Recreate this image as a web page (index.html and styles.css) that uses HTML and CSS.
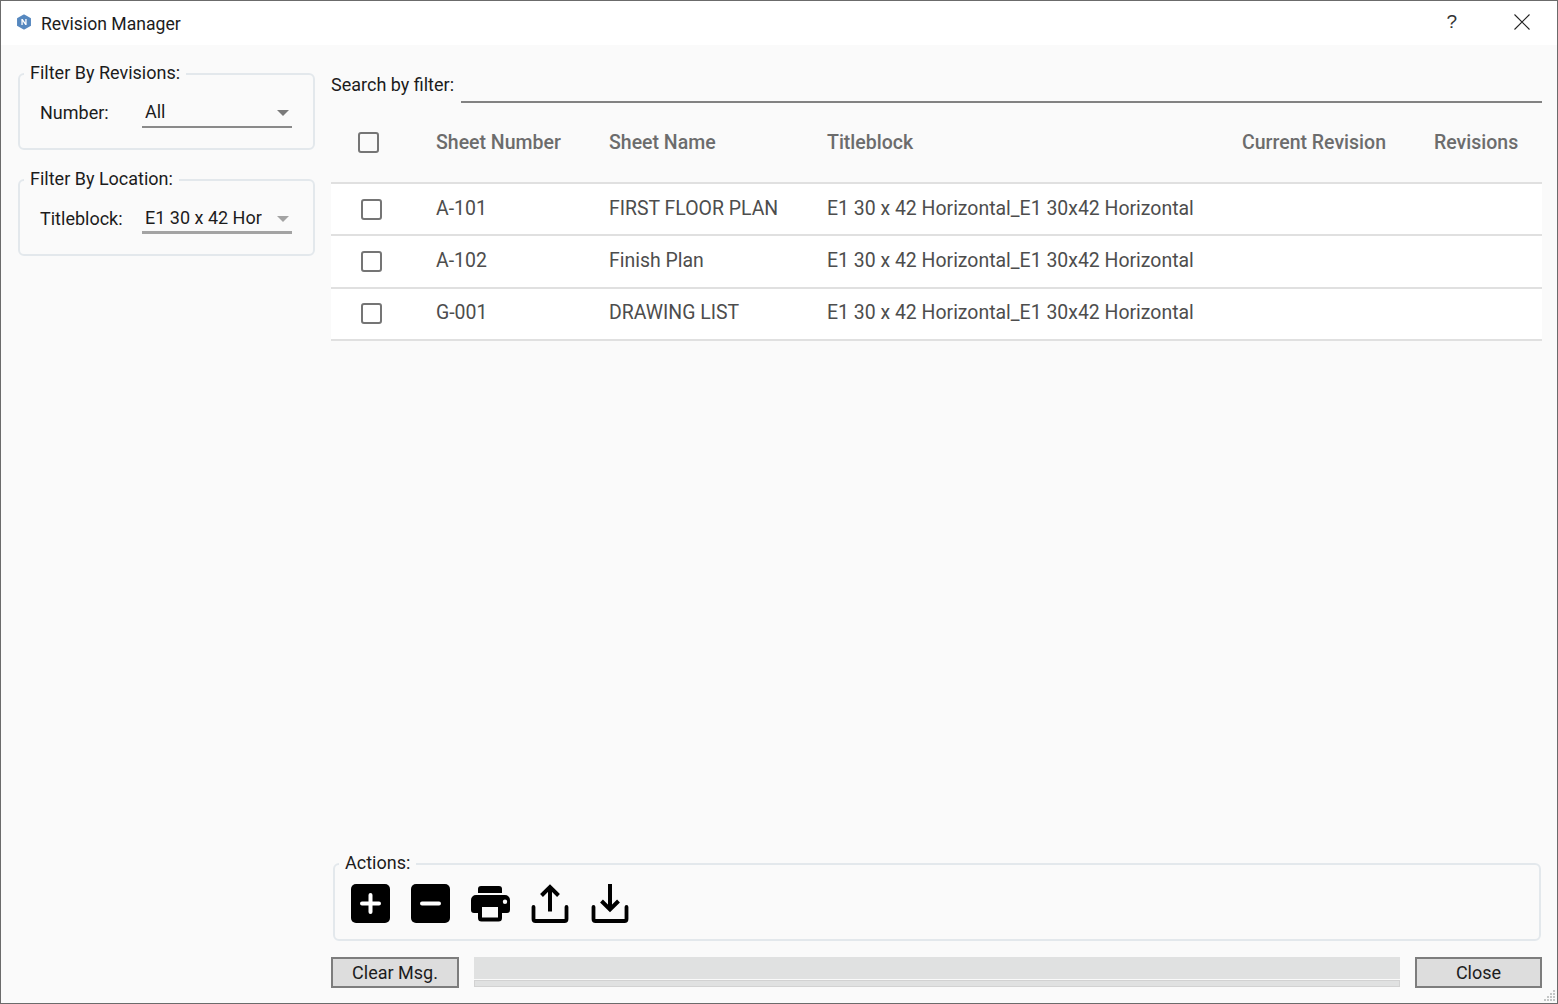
FILE: index.html
```html
<!DOCTYPE html>
<html lang="en">
<head>
<meta charset="UTF-8">
<meta name="viewport" content="width=device-width, initial-scale=1.0">
<title>Revision Manager</title>
<link rel="stylesheet" href="styles.css">
</head>
<body>
<div class="window">
    <div class="titlebar">
        <svg class="app-icon" width="16" height="16" viewBox="0 0 16 16">
            <path d="M8 1.200 14.200 4.600V11.400L8 14.800 1.800 11.400V4.600Z" fill="#5688bf" stroke="#5688bf" stroke-width="1.500" stroke-linejoin="round"/>
            <path d="M5.400 11V5H6.700L9.300 8.800V5H10.600V11H9.300L6.700 7.200V11Z" fill="#fff"/>
        </svg>
        <span class="title">Revision Manager</span>
        <span class="help">?</span>
        <svg class="close-x" width="16" height="16" viewBox="0 0 16 16">
            <path d="M.5.5 15.500 15.500M15.500.5 .5 15.500" stroke="#222" stroke-width="1.100" fill="none"/>
        </svg>
    </div>
    <div class="content">
        <div class="sidebar">
            <fieldset class="group">
                <legend>Filter By Revisions:</legend>
                <div class="field">
                    <label>Number:</label>
                    <div class="combo">
                        <span class="combo-value">All</span>
                        <span class="arrow"></span>
                    </div>
                </div>
            </fieldset>
            <fieldset class="group">
                <legend>Filter By Location:</legend>
                <div class="field">
                    <label>Titleblock:</label>
                    <div class="combo combo-light">
                        <span class="combo-value">E1 30 x 42 Hor</span>
                        <span class="arrow"></span>
                    </div>
                </div>
            </fieldset>
        </div>
        <div class="main">
            <div class="search">
                <label>Search by filter:</label>
                <div class="search-input"></div>
            </div>
            <table class="sheets">
                <colgroup>
                    <col class="col-check">
                    <col class="col-number">
                    <col class="col-name">
                    <col class="col-block">
                    <col class="col-current">
                    <col class="col-revs">
                </colgroup>
                <thead>
                    <tr>
                        <th><span class="check check-head"></span></th>
                        <th>Sheet Number</th>
                        <th>Sheet Name</th>
                        <th>Titleblock</th>
                        <th>Current Revision</th>
                        <th>Revisions</th>
                    </tr>
                </thead>
                <tbody>
                    <tr>
                        <td><span class="check"></span></td>
                        <td>A-101</td>
                        <td>FIRST FLOOR PLAN</td>
                        <td>E1 30 x 42 Horizontal_E1 30x42 Horizontal</td>
                        <td></td>
                        <td></td>
                    </tr>
                    <tr>
                        <td><span class="check"></span></td>
                        <td>A-102</td>
                        <td>Finish Plan</td>
                        <td>E1 30 x 42 Horizontal_E1 30x42 Horizontal</td>
                        <td></td>
                        <td></td>
                    </tr>
                    <tr>
                        <td><span class="check"></span></td>
                        <td>G-001</td>
                        <td>DRAWING LIST</td>
                        <td>E1 30 x 42 Horizontal_E1 30x42 Horizontal</td>
                        <td></td>
                        <td></td>
                    </tr>
                </tbody>
            </table>
            <fieldset class="group actions">
                <legend>Actions:</legend>
                <div class="icons">
                    <svg width="39" height="39" viewBox="0 0 39 39">
                        <rect width="39" height="39" rx="5"/>
                        <path d="M19.500 11V28M11 19.500H28" stroke="#fff" stroke-width="4" stroke-linecap="round"/>
                    </svg>
                    <svg width="39" height="39" viewBox="0 0 39 39">
                        <rect width="39" height="39" rx="5"/>
                        <path d="M11 19.500H28" stroke="#fff" stroke-width="4" stroke-linecap="round"/>
                    </svg>
                    <svg width="39" height="39" viewBox="0 0 39 39">
                        <path d="M7 9V5a3 3 0 0 1 3-3H28a3 3 0 0 1 3 3V9Z"/>
                        <path fill-rule="evenodd" d="M5 11H34a5 5 0 0 1 5 5V26a3 3 0 0 1-3 3H31v5a3.500 3.500 0 0 1-3.500 3.500H10.500A3.500 3.500 0 0 1 7 34V29H3a3 3 0 0 1-3-3V16a5 5 0 0 1 5-5ZM11 23V33.500H27V23ZM34 15.500a2.200 2.200 0 1 0 0 4.400 2.200 2.200 0 0 0 0-4.400Z"/>
                    </svg>
                    <svg width="39" height="39" viewBox="0 0 39 39">
                        <path d="M19 27.500V3M10.500 11.500 19 3 27.500 11.500" stroke="#000" stroke-width="4" fill="none"/>
                        <path d="M2.500 23V35a2 2 0 0 0 2 2H33.500a2 2 0 0 0 2-2V23" stroke="#000" stroke-width="3.800" stroke-linecap="round" fill="none"/>
                    </svg>
                    <svg width="39" height="39" viewBox="0 0 39 39">
                        <path d="M19 0V25M10.500 17 19 25.500 27.500 17" stroke="#000" stroke-width="4" fill="none"/>
                        <path d="M2.500 23V35a2 2 0 0 0 2 2H33.500a2 2 0 0 0 2-2V23" stroke="#000" stroke-width="3.800" stroke-linecap="round" fill="none"/>
                    </svg>
                </div>
            </fieldset>
            <div class="footer">
                <button class="btn btn-clear">Clear Msg.</button>
                <div class="status">
                    <div class="status-msg"></div>
                    <div class="status-bar"></div>
                </div>
                <button class="btn btn-close">Close</button>
            </div>
        </div>
    </div>
    <svg class="grip" width="14" height="14" viewBox="0 0 14 14" fill="#c4c6c6">
        <rect x="10" y="1" width="2" height="2"/>
        <rect x="7" y="4" width="2" height="2"/><rect x="10" y="4" width="2" height="2"/>
        <rect x="4" y="7" width="2" height="2"/><rect x="7" y="7" width="2" height="2"/><rect x="10" y="7" width="2" height="2"/>
        <rect x="1" y="10" width="2" height="2"/><rect x="4" y="10" width="2" height="2"/><rect x="7" y="10" width="2" height="2"/><rect x="10" y="10" width="2" height="2"/>
    </svg>
</div>
</body>
</html>
```

FILE: styles.css
```css
* {
    box-sizing: border-box;
}
html, body {
    margin: 0;
    padding: 0;
}
body {
    font-family: Roboto, "Liberation Sans", sans-serif;
    font-size: 18px;
    color: #1c1c1c;
}
.window {
    position: relative;
    width: 1558px;
    height: 1004px;
    border: 1px solid #6b6b6b;
    background-color: #fafafa;
    display: flex;
    flex-direction: column;
    overflow: hidden;
}
.titlebar {
    height: 44px;
    background-color: #fff;
    display: flex;
    align-items: center;
    padding: 0 27px 0 15px;
    flex-shrink: 0;
}
.app-icon {
    margin-right: 9px;
    margin-top: -3px;
}
.title {
    flex: 1;
    font-size: 17.600px;
    margin-top: 2px;
}
.help {
    font-family: "Liberation Sans", sans-serif;
    font-size: 19px;
    color: #333;
    margin-right: 57px;
    margin-top: -2px;
}
.close-x {
    margin-top: -2px;
}
.content {
    flex: 1;
    display: flex;
    padding: 17px 15px 15px 17px;
    min-height: 0;
}
.sidebar {
    width: 297px;
    margin-right: 16px;
    flex-shrink: 0;
    padding-top: 1px;
}
.group {
    margin: 0;
    border: 2px solid #e3e8ec;
    border-radius: 6px;
    padding: 0;
    min-width: 0;
}
.group legend {
    margin: 0 0 0 4px;
    padding: 0 6px;
    line-height: 22px;
    transform: translateY(-1px);
}
.sidebar .group {
    height: 87px;
    margin-bottom: 19px;
}
.field {
    display: flex;
    align-items: center;
    padding: 14px 0 0 20px;
}
.field label {
    width: 102px;
    flex-shrink: 0;
    margin-top: -2px;
}
.combo {
    width: 150px;
    height: 30px;
    display: flex;
    align-items: center;
    padding: 0 3px 2px;
    border-bottom: 2px solid #8a8a8a;
    margin-top: -1px;
}
.combo-light {
    border-bottom: 3px solid #a3a3a3;
    padding-bottom: 0;
}
.combo-value {
    display: block;
    width: 117px;
    white-space: nowrap;
    overflow: hidden;
}
.arrow {
    width: 0;
    height: 0;
    margin-left: 15px;
    border-left: 6px solid transparent;
    border-right: 6px solid transparent;
    border-top: 6px solid #7a7a7a;
    margin-top: 3px;
}
.combo-light .arrow {
    border-top-color: #a3a3a3;
}
.main {
    flex: 1;
    min-width: 0;
    display: flex;
    flex-direction: column;
}
.search {
    display: flex;
    align-items: center;
    height: 41px;
    flex-shrink: 0;
}
.search label {
    width: 130px;
    padding-top: 4px;
}
.search-input {
    flex: 1;
    height: 100%;
    border-bottom: 2px solid #828282;
}
.sheets {
    table-layout: fixed;
    width: 1211px;
    border-collapse: collapse;
    color: #4d4d4d;
    font-size: 19.500px;
}
.col-check { width: 105px; }
.col-number { width: 173px; }
.col-name { width: 218px; }
.col-block { width: 415px; }
.col-current { width: 192px; }
.col-revs { width: 108px; }
.sheets th {
    height: 80px;
    text-align: left;
    font-weight: 500;
    color: #6c6c6c;
    padding: 0;
    border-bottom: 2px solid #e0e0e0;
}
.sheets td {
    height: 52.300px;
    background-color: #fff;
    padding: 0 0 2px;
    border-bottom: 2px solid #e0e0e0;
    white-space: nowrap;
    font-size: 19.450px;
}
.check {
    display: block;
    width: 21px;
    height: 21px;
    margin: 2px 0 0 30px;
    border: 2px solid #757575;
    border-radius: 3px;
}
.check-head {
    margin: 0 0 0 27px;
}
.actions {
    margin: auto 1px 0 2px;
    height: 88px;
    flex-shrink: 0;
}
.icons {
    display: flex;
    gap: 21px;
    padding: 9px 0 0 16px;
}
.footer {
    display: flex;
    align-items: stretch;
    height: 31px;
    margin-top: 16px;
    flex-shrink: 0;
}
.btn {
    font-family: inherit;
    font-size: 18px;
    color: #1c1c1c;
    background-color: #dddddd;
    border: 2px solid #7d7d7d;
    padding: 0;
}
.btn-clear {
    width: 128px;
}
.btn-close {
    width: 127px;
}
.status {
    flex: 1;
    margin: 0 15px;
    display: flex;
    flex-direction: column;
    gap: 1px;
}
.status-msg {
    height: 22px;
    background-color: #e0e1e1;
}
.status-bar {
    height: 7px;
    background-color: #e0e1e1;
    border: 1px solid #d2d2d2;
}
.grip {
    position: absolute;
    right: 0;
    bottom: 0;
}
```
